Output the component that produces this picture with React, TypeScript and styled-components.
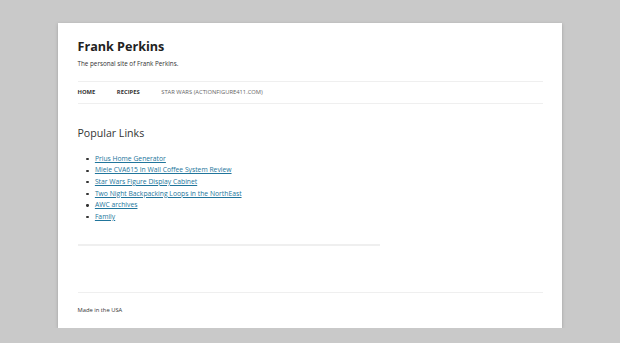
import React from "react";
import styled, { createGlobalStyle } from "styled-components";

const Global = createGlobalStyle`
  html, body { margin: 0; padding: 0; }
  body {
    background: #c9c9c9;
    font-family: "Open Sans", "Liberation Sans", sans-serif;
    color: #444;
  }
`;

const Site = styled.div`
  box-sizing: border-box;
  width: 504px;
  margin: 23px auto 0;
  padding: 0 19.5px;
  background: #fff;
  box-shadow: 0 1px 3px rgba(80, 80, 80, 0.35);
`;

const Header = styled.header`
  padding: 11.6px 0 11.6px;
`;

const SiteTitle = styled.h1`
  margin: 0;
  font-size: 12.6px;
  line-height: 23.25px;
  font-weight: 700;
  color: #222;
`;

const Tagline = styled.h2`
  margin: 0;
  font-size: 6.3px;
  line-height: 11.6px;
  font-weight: 400;
  color: #333;
`;

const Nav = styled.nav`
  display: flex;
  border-top: 1px solid #efefef;
  border-bottom: 1px solid #efefef;
`;

const NavItem = styled.a<{ $current?: boolean }>`
  display: block;
  margin-right: 21.6px;
  font-size: 5.8px;
  line-height: 20.5px;
  text-transform: uppercase;
  text-decoration: none;
  white-space: nowrap;
  font-weight: ${(p) => (p.$current ? 700 : 400)};
  color: ${(p) => (p.$current ? "#333" : "#666")};
`;

const Main = styled.main`
  width: 65.1%;
  padding-top: 22.5px;
  margin-bottom: 46px;
`;

const Article = styled.article`
  padding-bottom: 10.5px;
  border-bottom: 2px solid #efefef;
`;

const Heading = styled.h1`
  margin: 0 0 11px;
  font-size: 10.6px;
  line-height: 15.75px;
  font-weight: 400;
  color: #333;
`;

const LinkList = styled.ul`
  margin: 0 0 11.6px;
  padding: 0 0 0 17.4px;
  list-style: none;
  font-size: 6.78px;
  line-height: 11.6px;
  color: #333;
`;

const LinkItem = styled.li`
  display: flex;
  align-items: center;
  &::before {
    content: "";
    flex: none;
    width: 2.3px;
    height: 2.3px;
    border-radius: 50%;
    background: #333;
    margin: 1px 6.2px 0 -8.5px;
  }
`;

const Link = styled.a`
  color: #21759b;
  text-decoration: underline;
`;

const Footer = styled.footer`
  border-top: 1px solid #efefef;
  padding: 11.6px 0;
  font-size: 5.8px;
  line-height: 11.6px;
  color: #333;
`;

const links = [
  "Prius Home Generator",
  "Miele CVA615 In Wall Coffee System Review",
  "Star Wars Figure Display Cabinet",
  "Two Night Backpacking Loops in the NorthEast",
  "AWC archives",
  "Family",
];

export default function App() {
  return (
    <>
      <Global />
      <Site>
        <Header>
          <SiteTitle>Frank Perkins</SiteTitle>
          <Tagline>The personal site of Frank Perkins.</Tagline>
        </Header>
        <Nav>
          <NavItem href="#" $current>Home</NavItem>
          <NavItem href="#" $current>Recipes</NavItem>
          <NavItem href="#">Star Wars (actionfigure411.com)</NavItem>
        </Nav>
        <Main>
          <Article>
            <Heading>Popular Links</Heading>
            <LinkList>
              {links.map((l) => (
                <LinkItem key={l}>
                  <Link href="#">{l}</Link>
                </LinkItem>
              ))}
            </LinkList>
          </Article>
        </Main>
        <Footer>Made in the USA</Footer>
      </Site>
    </>
  );
}
